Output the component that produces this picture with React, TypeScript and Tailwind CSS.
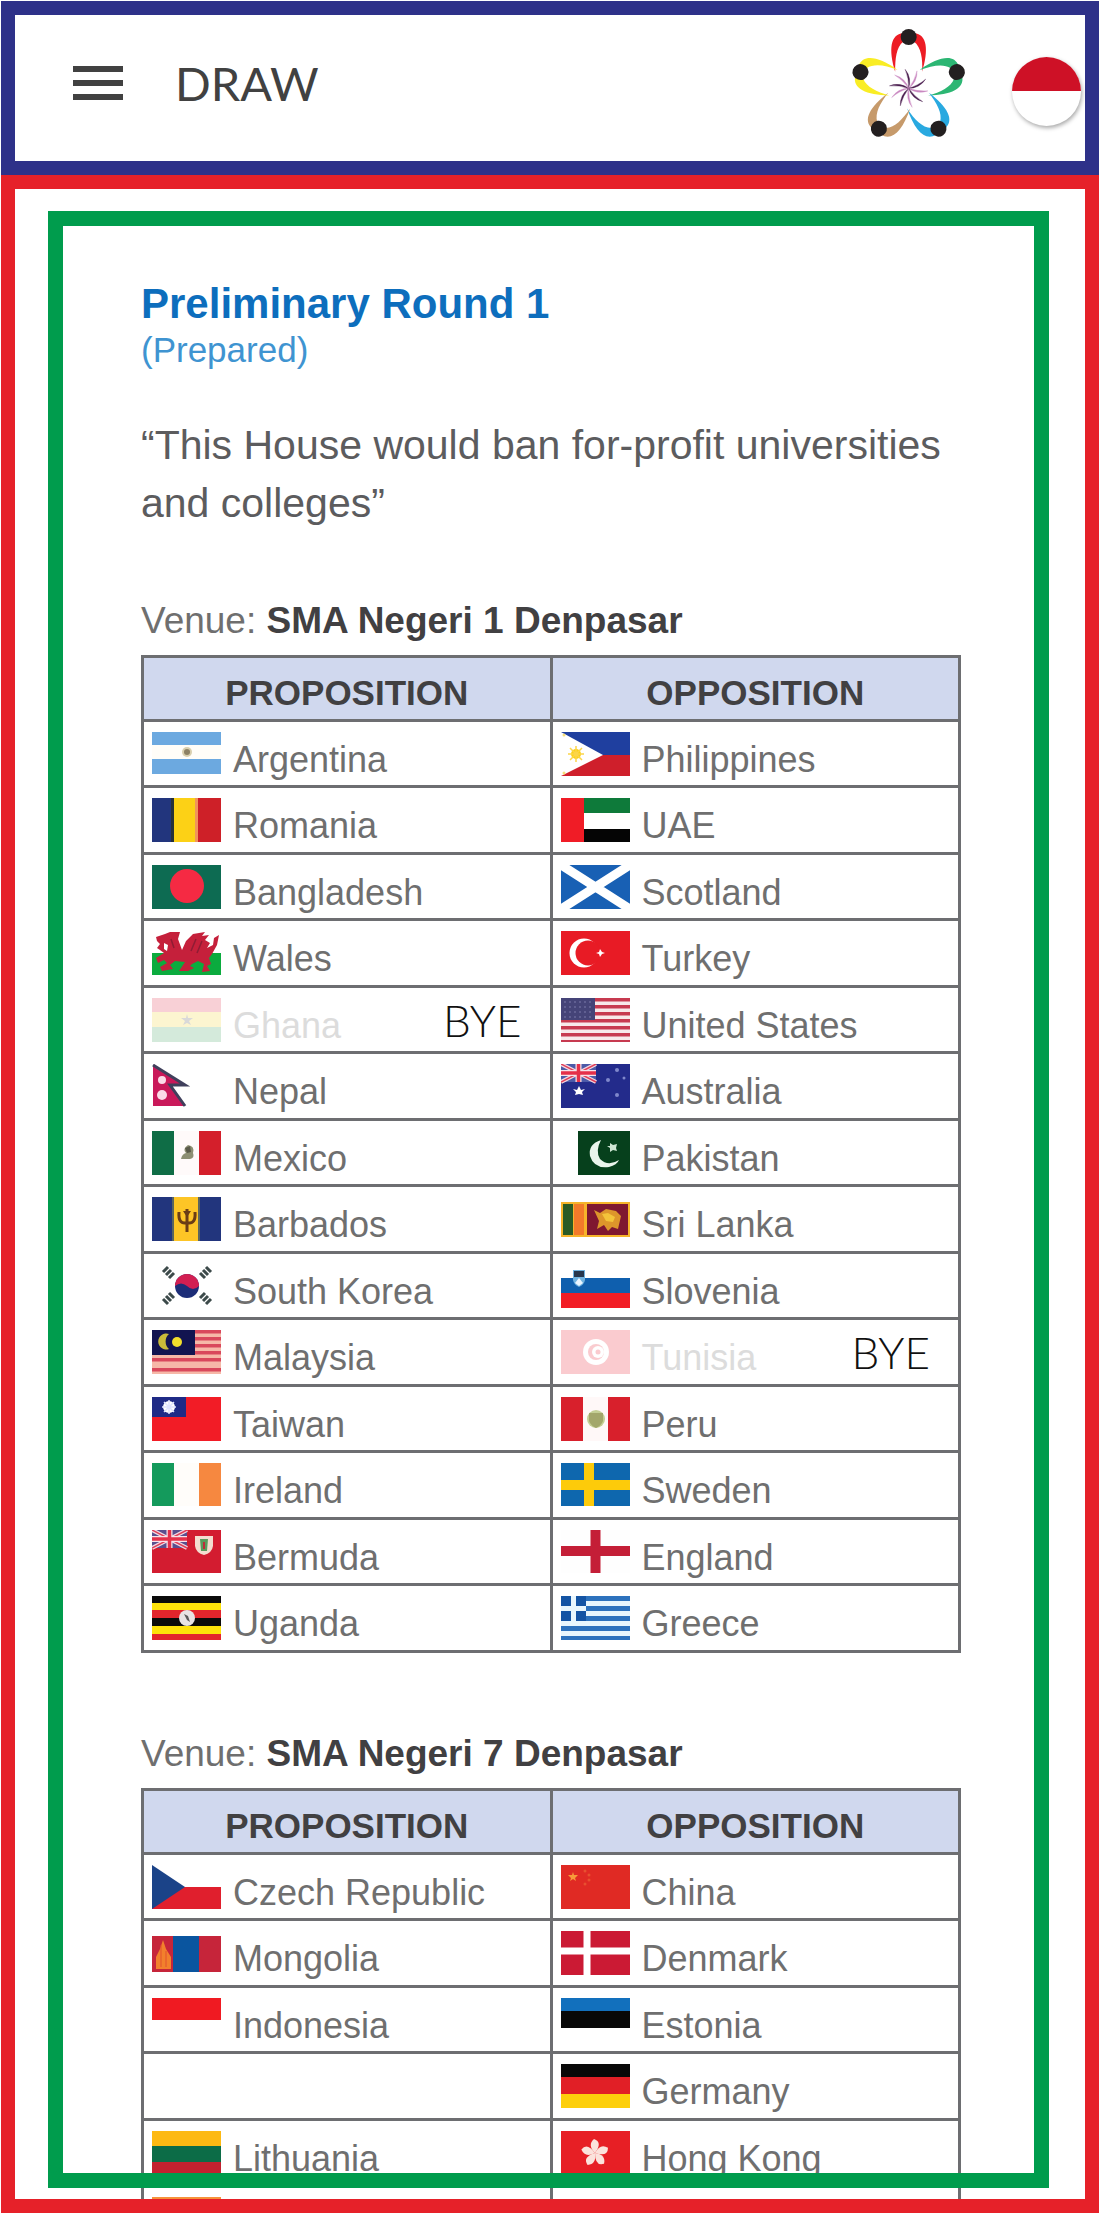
import type { ReactNode } from "react";

type Team = { name?: string; flag: string; bye?: boolean } | null;
type Pairing = [Team, Team];

const UnionJack = ({ base }: { base: string }) => (
  <g>
    <rect width="35" height="18" fill={base} />
    <path d="M0 0L35 18M35 0L0 18" stroke="#f3d9e2" strokeWidth="4" />
    <path d="M0 0L35 18M35 0L0 18" stroke="#e0405a" strokeWidth="1.5" />
    <path d="M17.500 0V18M0 9H35" stroke="#f6e3ea" strokeWidth="6" />
    <path d="M17.500 0V18M0 9H35" stroke="#e5304a" strokeWidth="3.500" />
  </g>
);

const flags: Record<string, ReactNode> = {
  argentina: (
    <>
      <rect width="69" height="13" fill="#6ca9e0" />
      <rect y="27" width="69" height="15" fill="#6ca9e0" />
      <rect y="13" width="69" height="14" fill="#fffdf8" />
      <circle cx="35" cy="20" r="5" fill="#d9cfae" />
      <circle cx="35" cy="20" r="3" fill="#8d8164" />
    </>
  ),
  philippines: (
    <>
      <rect width="69" height="23" fill="#1f3f9f" />
      <rect y="23" width="69" height="21" fill="#cf1f2b" />
      <path d="M0 0L42 23L0 44Z" fill="#fff" />
      <circle cx="15" cy="22" r="5" fill="#fcd116" />
      <path d="M15 14V30M7 22H23M9 16L21 28M21 16L9 28" stroke="#fcd54a" strokeWidth="1.500" />
      <circle cx="3" cy="3" r="1.500" fill="#f6df7a" />
      <circle cx="3" cy="41" r="1.500" fill="#f6df7a" />
    </>
  ),
  romania: (
    <>
      <rect width="22" height="44" fill="#22357d" />
      <rect x="19" width="4" height="44" fill="#26303a" />
      <rect x="22" width="24" height="44" fill="#fcd116" />
      <rect x="43" width="4" height="44" fill="#f0955a" />
      <rect x="46" width="23" height="44" fill="#ce2028" />
    </>
  ),
  uae: (
    <>
      <rect x="22" width="47" height="15" fill="#0e7a3a" />
      <rect x="22" y="15" width="47" height="16" fill="#fff" />
      <rect x="22" y="31" width="47" height="13" fill="#050505" />
      <rect width="23" height="44" fill="#f01c26" />
    </>
  ),
  bangladesh: (
    <>
      <rect width="69" height="44" fill="#0d6b52" />
      <circle cx="35" cy="21" r="17" fill="#f52a43" />
    </>
  ),
  scotland: (
    <>
      <rect width="69" height="44" fill="#1860b4" />
      <path d="M0 0L69 44M69 0L0 44" stroke="#fff" strokeWidth="9" />
    </>
  ),
  wales: (
    <>
      <rect y="22" width="69" height="22" fill="#0bab3e" />
      <path
        d="M4 6L13 3L18 1L28 1L26 8L30 19L34 10L41 3L53 1L50 5L57 4L53 9L58 12L55 17L61 14L62 7L67 4L65 14L60 23L57 27L59 33L55 35L58 40L50 41L52 33L46 30L40 33L38 35L42 37L36 40L27 40L31 34L33 31L23 30L18 34L21 38L10 40L8 36L15 32L12 29L6 32L4 27L12 22L8 19L5 17L8 13L5 10Z"
        fill="#c5203b"
      />
      <path d="M19 8L22 17M44 8L39 20M50 10L45 22" stroke="#8f1c34" strokeWidth="1.500" />
      <path d="M12 12L16 14L15 20L12 18Z" fill="#fff" />
    </>
  ),
  turkey: (
    <>
      <rect width="69" height="44" fill="#e81b25" />
      <circle cx="23" cy="22" r="14.500" fill="#fff" />
      <circle cx="27" cy="22" r="12.500" fill="#e81b25" />
      <path d="M35 22L38 21L39 18L41 21L44 22L41 23L39 26L38 23Z" fill="#fff" />
    </>
  ),
  ghana: (
    <>
      <rect width="69" height="14" fill="#e0183a" />
      <rect y="14" width="69" height="15" fill="#f5d21a" />
      <rect y="29" width="69" height="15" fill="#2f9a4e" />
      <path d="M35 16L36 20L41 20L37 23L39 27L35 25L31 27L33 23L29 20L34 20Z" fill="#444" />
    </>
  ),
  usa: (
    <>
      <rect width="69" height="48" fill="#f7e8ea" />
      {[0, 7, 14, 21, 28, 35, 42].map((y) => (
        <rect key={y} y={y} width="69" height="3.500" fill="#c73a50" />
      ))}
      <rect width="34" height="22" fill="#454478" />
      {[4, 9, 14, 19].map((y) => (
        <path key={y} d={`M3 ${y}H32`} stroke="#6a6899" strokeWidth="1.500" strokeDasharray="2 3" />
      ))}
    </>
  ),
  nepal: (
    <>
      <path d="M1 1L33 21H18L33 42H1Z" fill="#c9195a" />
      <path d="M1 1L33 21H18L33 42" fill="none" stroke="#40405c" strokeWidth="3" />
      <circle cx="10" cy="16" r="4" fill="#fbdbe8" />
      <circle cx="10" cy="31" r="5" fill="#fbdbe8" />
    </>
  ),
  australia: (
    <>
      <rect width="69" height="44" fill="#232b8b" />
      <UnionJack base="#4c5aa8" />
      <path d="M18 22L20 26L24 25L21 28L22 31L18 30L14 31L15 28L12 25L16 26Z" fill="#fff" />
      <g fill="#8088cc">
        <circle cx="56" cy="6" r="2" />
        <circle cx="47" cy="16" r="2" />
        <circle cx="63" cy="14" r="1.500" />
        <circle cx="56" cy="31" r="2" />
      </g>
    </>
  ),
  mexico: (
    <>
      <rect width="22" height="44" fill="#0f6d46" />
      <rect x="22" width="25" height="44" fill="#fffafa" />
      <rect x="47" width="22" height="44" fill="#d41f2b" />
      <path d="M29 28Q30 23 34 22Q30 18 36 14Q43 15 41 22Q43 27 38 28Z" fill="#8d8f73" />
      <path d="M33 17L38 15L39 21L35 22Z" fill="#5a5a4a" />
    </>
  ),
  pakistan: (
    <>
      <rect x="17" width="52" height="44" fill="#06401c" />
      <path d="M40 9Q27 13 29 25Q33 38 48 36Q56 34 58 29Q47 36 39 28Q34 20 40 9Z" fill="#eaf5ec" />
      <path d="M49 12L52 14L56 13L55 17L56 20L52 19L49 21L49 17L46 15L49 15Z" fill="#cfe6d4" />
    </>
  ),
  barbados: (
    <>
      <rect width="22" height="44" fill="#22357d" />
      <rect x="22" width="24" height="44" fill="#fdc526" />
      <rect x="46" width="23" height="44" fill="#22357d" />
      <path d="M35 12V35M27 15Q26 27 34 26M43 15Q44 27 36 26" stroke="#6a3d16" strokeWidth="3" fill="none" />
      <path d="M31 14H39L35 20Z" fill="#6a3d16" />
      <path d="M20 0H22V44H20ZM46 0H48V44H46Z" fill="#5a6560" />
    </>
  ),
  srilanka: (
    <>
      <rect y="5" width="69" height="35" fill="#f6b42a" />
      <rect x="2" y="7" width="10" height="31" fill="#2b5b25" />
      <rect x="13" y="7" width="10" height="31" fill="#f27a2a" />
      <rect x="26" y="7" width="41" height="31" fill="#7f1730" />
      <path d="M33 13L39 16L45 12L55 14L60 19L57 32L51 30L47 34L43 28L36 32L38 24Z" fill="#dd962b" />
      <path d="M41 17L47 16L54 20L52 25L45 24Z" fill="#f3c43a" />
    </>
  ),
  korea: (
    <>
      <circle cx="35" cy="22" r="12" fill="#1c2d78" />
      <path d="M23 22A12 12 0 0 1 47 22Q41 28 35 22Q29 17 23 22Z" fill="#d21f52" />
      <g stroke="#3c4a4a" strokeWidth="3">
        <path d="M11 8L16 3M14 11L19 6M17 14L22 9" />
        <path d="M48 9L53 14M51 6L56 11M54 3L59 8" />
        <path d="M11 35L16 40M14 32L19 37M17 29L22 34" />
        <path d="M48 34L53 29M51 37L56 32M54 40L59 35" />
      </g>
    </>
  ),
  slovenia: (
    <>
      <rect y="14" width="69" height="15" fill="#0f5fae" />
      <rect y="29" width="69" height="15" fill="#f21d25" />
      <path d="M12 6H24V16Q23 21 18 23Q13 21 12 16Z" fill="#6fb2e0" />
      <path d="M13 7H23V13H13Z" fill="#26364d" />
      <path d="M14 19L18 14L22 19L18 22Z" fill="#eaf5ff" />
    </>
  ),
  malaysia: (
    <>
      <rect width="69" height="44" fill="#f6b8a8" />
      {[0, 7, 14, 21, 28, 38].map((y) => (
        <rect key={y} y={y} width="69" height="3.500" fill="#d9485c" />
      ))}
      <rect width="43" height="25" fill="#121450" />
      <path d="M17 4A8 8 0 1 0 17 19A10 10 0 0 1 17 4Z" fill="#c9bb3a" />
      <circle cx="25" cy="12" r="5" fill="#f2df2c" />
    </>
  ),
  tunisia: (
    <>
      <rect width="69" height="46" fill="#e70013" />
      <circle cx="35" cy="22" r="13" fill="#fff" />
      <circle cx="35" cy="22" r="8" fill="#e70013" />
      <circle cx="37" cy="22" r="6" fill="#fff" />
      <circle cx="37" cy="22" r="2.500" fill="#e70013" />
    </>
  ),
  taiwan: (
    <>
      <rect width="69" height="44" fill="#f21c26" />
      <rect width="34" height="20" fill="#1f2a86" />
      <circle cx="17" cy="10" r="6" fill="#fff" />
      <path d="M17 3V17M10 10H24M12 5L22 15M22 5L12 15" stroke="#dfe3ff" strokeWidth="1.500" />
    </>
  ),
  peru: (
    <>
      <rect width="22" height="44" fill="#d8202c" />
      <rect x="22" width="25" height="44" fill="#fff8f8" />
      <rect x="47" width="22" height="44" fill="#d8202c" />
      <circle cx="35" cy="22" r="9" fill="#c4cf94" />
      <path d="M28 16H42V24Q40 29 35 31Q30 29 28 24Z" fill="#a3a76b" />
    </>
  ),
  ireland: (
    <>
      <rect width="22" height="43" fill="#149a5c" />
      <rect x="22" width="25" height="43" fill="#fffdfa" />
      <rect x="47" width="22" height="43" fill="#f68840" />
    </>
  ),
  sweden: (
    <>
      <rect width="69" height="43" fill="#0e67ae" />
      <path d="M28 0V43M0 22H69" stroke="#fdcb0a" strokeWidth="10" />
    </>
  ),
  bermuda: (
    <>
      <rect width="69" height="43" fill="#d31c30" />
      <UnionJack base="#5a4f8e" />
      <path d="M43 6H61V16Q60 23 52 25Q44 23 43 16Z" fill="#f4ddd0" />
      <path d="M48 9H56L55 21H49Z" fill="#5a9a5c" />
      <path d="M52 12V19" stroke="#c02b3a" strokeWidth="2" />
    </>
  ),
  england: (
    <>
      <rect width="69" height="43" fill="#fefefe" />
      <path d="M34.500 0V43M0 21H69" stroke="#c41e37" strokeWidth="10" />
    </>
  ),
  uganda: (
    <>
      <rect width="69" height="7" fill="#0a0a0a" />
      <rect y="7" width="69" height="7" fill="#fde20a" />
      <rect y="14" width="69" height="8" fill="#e3252c" />
      <rect y="22" width="69" height="8" fill="#0a0a0a" />
      <rect y="30" width="69" height="8" fill="#fde20a" />
      <rect y="38" width="69" height="6" fill="#e3252c" />
      <circle cx="35" cy="22" r="8" fill="#e8e4e4" />
      <path d="M32 18L36 20L38 26L35 24Z" fill="#5a5a5a" />
    </>
  ),
  greece: (
    <>
      <rect width="69" height="44" fill="#e8f6fd" />
      {[0, 10, 20, 30, 40].map((y) => (
        <rect key={y} y={y} width="69" height="5" fill="#2d72bd" />
      ))}
      <rect width="25" height="25" fill="#1454a4" />
      <path d="M12.500 0V25M0 12.500H25" stroke="#e8f6fd" strokeWidth="5" />
    </>
  ),
  czech: (
    <>
      <rect y="22" width="69" height="22" fill="#e01f2d" />
      <path d="M0 0L33 22L0 44Z" fill="#1b4388" />
    </>
  ),
  china: (
    <>
      <rect width="69" height="44" fill="#e02a24" />
      <path d="M12 7L13 10L17 10L14 13L15 16L12 14L9 16L10 13L7 10L11 10Z" fill="#f79a3a" />
      <g fill="#e85030">
        <circle cx="24" cy="6" r="1.500" />
        <circle cx="28" cy="10" r="1.500" />
        <circle cx="28" cy="15" r="1.500" />
        <circle cx="24" cy="19" r="1.500" />
      </g>
    </>
  ),
  mongolia: (
    <>
      <rect y="5" width="69" height="36" fill="#c6253a" />
      <rect x="21" y="5" width="26" height="36" fill="#0a559f" />
      <path d="M4 38V26L8 18L11 9L14 18L19 26V38Z" fill="#f2802c" />
      <path d="M9 14V36M14 20V36" stroke="#e2502c" strokeWidth="1" />
    </>
  ),
  denmark: (
    <>
      <rect width="69" height="44" fill="#cb1a34" />
      <path d="M26 0V44M0 20H69" stroke="#fff" strokeWidth="7" />
    </>
  ),
  indonesia: <rect width="69" height="22" fill="#f01a22" />,
  estonia: (
    <>
      <rect width="69" height="13" fill="#1270bd" />
      <rect y="13" width="69" height="17" fill="#080808" />
    </>
  ),
  germany: (
    <>
      <rect width="69" height="13" fill="#080808" />
      <rect y="13" width="69" height="17" fill="#e11f26" />
      <rect y="30" width="69" height="14" fill="#fdcf0c" />
    </>
  ),
  lithuania: (
    <>
      <rect width="69" height="15" fill="#fdb913" />
      <rect y="15" width="69" height="16" fill="#0c6c47" />
      <rect y="31" width="69" height="13" fill="#c3212f" />
    </>
  ),
  hongkong: (
    <>
      <rect width="69" height="44" fill="#e71f25" />
      {[0, 72, 144, 216, 288].map((angle) => (
        <path
          key={angle}
          d="M34 22Q26 14 33 8Q42 11 34 22Z"
          fill="#fbe3dc"
          transform={`rotate(${angle} 34 22)`}
        />
      ))}
    </>
  ),
  india: (
    <>
      <rect width="69" height="15" fill="#f7923a" />
      <rect y="29" width="69" height="15" fill="#128807" />
    </>
  ),
};

const venueOne: Pairing[] = [
  [{ name: "Argentina", flag: "argentina" }, { name: "Philippines", flag: "philippines" }],
  [{ name: "Romania", flag: "romania" }, { name: "UAE", flag: "uae" }],
  [{ name: "Bangladesh", flag: "bangladesh" }, { name: "Scotland", flag: "scotland" }],
  [{ name: "Wales", flag: "wales" }, { name: "Turkey", flag: "turkey" }],
  [{ name: "Ghana", flag: "ghana", bye: true }, { name: "United States", flag: "usa" }],
  [{ name: "Nepal", flag: "nepal" }, { name: "Australia", flag: "australia" }],
  [{ name: "Mexico", flag: "mexico" }, { name: "Pakistan", flag: "pakistan" }],
  [{ name: "Barbados", flag: "barbados" }, { name: "Sri Lanka", flag: "srilanka" }],
  [{ name: "South Korea", flag: "korea" }, { name: "Slovenia", flag: "slovenia" }],
  [{ name: "Malaysia", flag: "malaysia" }, { name: "Tunisia", flag: "tunisia", bye: true }],
  [{ name: "Taiwan", flag: "taiwan" }, { name: "Peru", flag: "peru" }],
  [{ name: "Ireland", flag: "ireland" }, { name: "Sweden", flag: "sweden" }],
  [{ name: "Bermuda", flag: "bermuda" }, { name: "England", flag: "england" }],
  [{ name: "Uganda", flag: "uganda" }, { name: "Greece", flag: "greece" }],
];

const venueTwo: Pairing[] = [
  [{ name: "Czech Republic", flag: "czech" }, { name: "China", flag: "china" }],
  [{ name: "Mongolia", flag: "mongolia" }, { name: "Denmark", flag: "denmark" }],
  [{ name: "Indonesia", flag: "indonesia" }, { name: "Estonia", flag: "estonia" }],
  [null, { name: "Germany", flag: "germany" }],
  [{ name: "Lithuania", flag: "lithuania" }, { name: "Hong Kong", flag: "hongkong" }],
  [{ flag: "india" }, null],
];

function TeamCell({ team }: { team: Team }) {
  return (
    <td className="border-3 border-[#6d6e71] p-0">
      {team && (
        <div className="flex items-center gap-3 pl-2">
          <svg
            viewBox="0 0 69 44"
            className={team.bye ? "h-11 w-[69px] shrink-0 opacity-20" : "h-11 w-[69px] shrink-0"}
            aria-hidden="true"
          >
            {flags[team.flag]}
          </svg>
          {team.name && (
            <span
              className={
                team.bye
                  ? "pt-3 text-[36px] leading-9 text-[#dcdcdc]"
                  : "pt-3 text-[36px] leading-9 text-[#6f6f6f]"
              }
            >
              {team.name}
            </span>
          )}
          {team.bye && (
            <span className="mr-7 ml-auto font-['Lato',sans-serif] text-[44px] leading-9 font-light text-[#111]">
              BYE
            </span>
          )}
        </div>
      )}
    </td>
  );
}

function Venue({ name, pairings }: { name: string; pairings: Pairing[] }) {
  return (
    <section>
      <h2 className="text-[37px] leading-11 font-normal text-[#6f6f6f]">
        Venue: <strong className="font-bold text-[#414042]">{name}</strong>
      </h2>
      <table className="mt-3 w-full table-fixed border-collapse">
        <thead>
          <tr className="h-16 bg-[#d0d8ee] text-[35px] leading-9 text-[#414042]">
            <th scope="col" className="border-3 border-[#6d6e71] p-0 pt-2 font-bold">
              PROPOSITION
            </th>
            <th scope="col" className="border-3 border-[#6d6e71] p-0 pt-2 font-bold">
              OPPOSITION
            </th>
          </tr>
        </thead>
        <tbody>
          {pairings.map(([proposition, opposition], index) => (
            <tr key={index} className="h-[66px] even:h-[67px]">
              <TeamCell team={proposition} />
              <TeamCell team={opposition} />
            </tr>
          ))}
        </tbody>
      </table>
    </section>
  );
}

function BlossomLogo() {
  const petals = ["#ed1c24", "#2cb673", "#29a9e0", "#c69a6b", "#f9ed25"];
  return (
    <svg
      viewBox="150 83 350 330"
      className="h-[110px] w-[117px] overflow-visible"
      role="img"
      aria-label="Tournament logo"
    >
      {petals.map((color, i) => (
        <g key={color} transform={`rotate(${i * 72} 325.500 262)`}>
          <path d="M309 99C270 102 265 148 285 214C285 174 288 141 309 124Z" fill={color} />
          <path d="M342 99C381 102 386 148 366 214C368 174 363 141 342 124Z" fill={color} />
          <circle cx="325.500" cy="110" r="24" fill="#231f20" />
        </g>
      ))}
      {[0, 1, 2, 3, 4, 5, 6, 7, 8, 9].map((i) => (
        <path
          key={i}
          d="M325 266Q336 233 315 207Q327 235 325 266Z"
          fill={i % 2 === 0 ? "#4b1d4f" : "#c987c0"}
          stroke={i % 2 === 0 ? "#4b1d4f" : "#c987c0"}
          transform={`rotate(${i * 36} 325.500 264)`}
        />
      ))}
    </svg>
  );
}

export default function App() {
  return (
    <div className="flex h-screen flex-col bg-white p-px font-['Liberation_Sans',Arial,sans-serif]">
      <header className="flex shrink-0 items-center border-14 border-[#2e3189] pt-[13px] pr-1 pb-[23px] pl-[58px]">
        <button type="button" aria-label="Open menu" className="flex w-[50px] flex-col gap-2">
          <span className="h-[6px] bg-[#414141]" />
          <span className="h-[6px] bg-[#414141]" />
          <span className="h-[6px] bg-[#414141]" />
        </button>
        <h1 className="ml-[52px] font-['Lato',sans-serif] text-[47px] leading-none font-normal text-[#414141]">
          DRAW
        </h1>
        <div className="ml-auto flex items-center gap-[45px]">
          <BlossomLogo />
          <button
            type="button"
            aria-label="Bahasa Indonesia"
            className="mt-4 flex size-[69px] flex-col overflow-hidden rounded-full bg-white shadow-[1px_2px_4px_rgba(0,0,0,0.35)]"
          >
            <span className="h-1/2 w-full bg-[#ce1126]" />
          </button>
        </div>
      </header>

      <main className="relative min-h-0 flex-1 overflow-hidden border-14 border-[#e62129]">
        <div className="pt-[91px] pr-[124px] pl-[126px]">
          <h2 className="text-[42px] leading-12 font-bold text-[#0d6ebd]">Preliminary Round 1</h2>
          <p className="text-[35px] leading-11 text-[#3f94d1]">(Prepared)</p>
          <p className="mt-11 text-[41px] leading-[58px] text-[#5c5c5e]">
            “This House would ban for-profit universities and colleges”
          </p>
          <div className="mt-[67px] flex flex-col gap-[79px]">
            <Venue name="SMA Negeri 1 Denpasar" pairings={venueOne} />
            <Venue name="SMA Negeri 7 Denpasar" pairings={venueTwo} />
          </div>
        </div>
        <div className="pointer-events-none absolute top-[22px] right-9 bottom-[11px] left-[33px] border-15 border-[#009c4d]" />
      </main>
    </div>
  );
}
